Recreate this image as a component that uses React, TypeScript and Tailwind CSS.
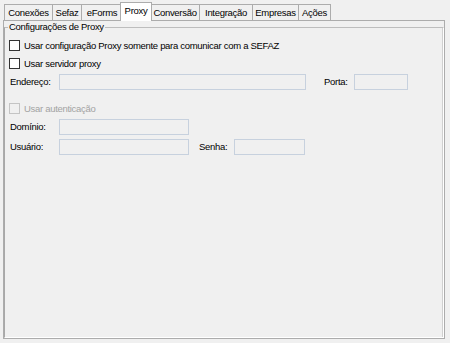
import React from 'react'

// WinForms-style "Proxy" tab page
const tabs = [
  { label: 'Conexões', w: 'w-[48px]' },
  { label: 'Sefaz', w: 'w-[29px]' },
  { label: 'eForms', w: 'w-[41px]' },
  { label: 'Proxy', w: 'w-[32px]', selected: true },
  { label: 'Conversão', w: 'w-[49px]' },
  { label: 'Integração', w: 'w-[53px]' },
  { label: 'Empresas', w: 'w-[46px]' },
  { label: 'Ações', w: 'w-[33px]', last: true },
]

function CheckBox({ label, disabled = false }: { label: string; disabled?: boolean }) {
  return (
    <div className="flex items-center h-[13px] gap-[4px]">
      <span
        className={
          disabled
            ? 'w-[11px] h-[11px] border border-[#c4c4c4] bg-[#f0f0f0]'
            : 'w-[11px] h-[11px] border border-[#333333] bg-white'
        }
      />
      <span className={disabled ? 'text-[#a3a3a3] leading-[13px]' : 'text-black leading-[13px]'}>{label}</span>
    </div>
  )
}

function TextBox({ w }: { w: string }) {
  return <div className={`${w} h-[16px] border border-[#c7d1de] bg-[#f0f0f0]`} />
}

export default function App() {
  return (
    <div className="w-[450px] h-[343px] bg-[#f0f0f0] text-[9.5px] tracking-[-0.3px] text-black font-['Liberation_Sans',Arial,sans-serif] overflow-hidden">
      {/* Tab strip */}
      <div className="flex items-end h-[20px] pl-[4px]">
        {tabs.map((t) =>
          t.selected ? (
            <div
              key={t.label}
              className={`${t.w} relative z-10 -mx-[2px] -mb-px h-[19px] flex items-center justify-center border border-b-0 border-[#acacac] bg-white leading-none pb-[3px]`}
            >
              {t.label}
            </div>
          ) : (
            <div
              key={t.label}
              className={
                t.last
                  ? `${t.w} h-[16px] flex items-center justify-center border-l border-t border-r border-[#acacac] bg-[#f0f0f0] leading-none`
                  : `${t.w} h-[16px] flex items-center justify-center border-l border-t border-[#acacac] bg-[#f0f0f0] leading-none`
              }
            >
              {t.label}
            </div>
          )
        )}
      </div>

      {/* Tab page */}
      <div className="ml-[3px] w-[442px] h-[319px] border border-[#acacac] bg-[#f0f0f0]">
        <fieldset className="w-[440px] h-[317px] border-l border-t border-r border-b border-l-[#a8a8a8] border-t-[#bdbdbd] border-r-white border-b-white shadow-[inset_-1px_0_0_#d0d0d0]">
          <legend className="ml-[3px] px-[1px] leading-[12px]">Configurações de Proxy</legend>
          <div className="pl-[4px] pt-[6px] flex flex-col">
            <CheckBox label="Usar configuração Proxy somente para comunicar com a SEFAZ" />

            <div className="mt-[5px]">
              <CheckBox label="Usar servidor proxy" />
            </div>

            <div className="mt-[4px] h-[16px] flex items-center">
              <span className="w-[50px] pl-[1px]">Endereço:</span>
              <TextBox w="w-[247px]" />
              <span className="ml-[18px] w-[30px]">Porta:</span>
              <TextBox w="w-[54px]" />
            </div>

            <div className="mt-[12px]">
              <CheckBox label="Usar autenticação" disabled />
            </div>

            <div className="mt-[4px] h-[16px] flex items-center">
              <span className="w-[50px] pl-[1px]">Domínio:</span>
              <TextBox w="w-[130px]" />
            </div>

            <div className="mt-[4px] h-[16px] flex items-center">
              <span className="w-[50px] pl-[1px]">Usuário:</span>
              <TextBox w="w-[130px]" />
              <span className="ml-[10px] w-[35px]">Senha:</span>
              <TextBox w="w-[71px]" />
            </div>
          </div>
        </fieldset>
      </div>
    </div>
  )
}
